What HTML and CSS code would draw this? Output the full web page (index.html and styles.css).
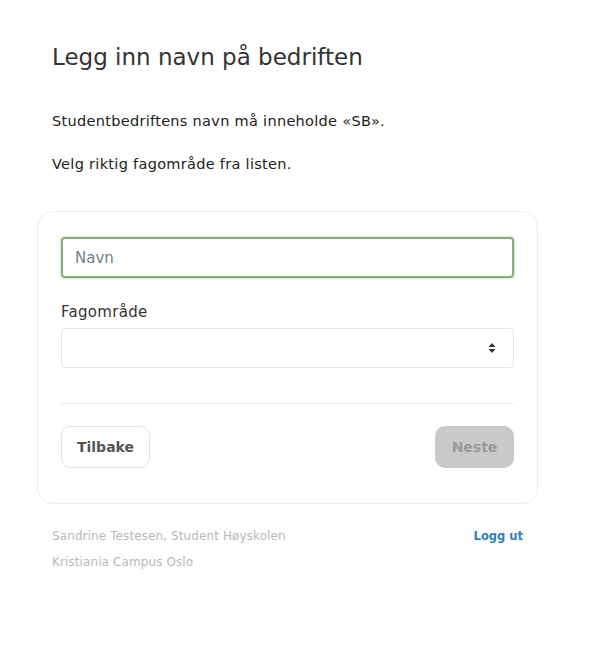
FILE: index.html
```html
<!DOCTYPE html>
<html lang="no">
<head>
<meta charset="utf-8">
<title>Legg inn navn på bedriften</title>
<link rel="stylesheet" href="styles.css">
</head>
<body>
<main class="page">
  <header class="intro">
    <h1 class="title">Legg inn navn på bedriften</h1>
    <p class="lead">Studentbedriftens navn må inneholde «SB».</p>
    <p class="lead">Velg riktig fagområde fra listen.</p>
  </header>
  <section class="card">
    <input class="field field-focus" type="text" placeholder="Navn">
    <label class="label">Fagområde</label>
    <div class="select">
      <svg class="arrows" width="8" height="12" viewBox="0 0 8 12"><path d="M4 1 L7.5 5 H0.5 Z M4 11 L0.5 7 H7.5 Z" fill="#333"/></svg>
    </div>
    <hr class="divider">
    <div class="actions">
      <button class="btn btn-back">Tilbake</button>
      <button class="btn btn-next">Neste</button>
    </div>
  </section>
  <footer class="foot">
    <div class="foot-info">
      <div>Sandrine Testesen, Student Høyskolen</div>
      <div>Kristiania Campus Oslo</div>
    </div>
    <a class="logout" href="#">Logg ut</a>
  </footer>
</main>
</body>
</html>
```
FILE: styles.css
```css
* { box-sizing: border-box; }
html, body { margin: 0; background: #fff; }
body { font-family: "DejaVu Sans", "Liberation Sans", sans-serif; color: #222; }
.page { width: 501px; margin-left: 37px; padding-top: 42px; }
.intro { padding-left: 15px; }
.title { margin: 0; font-size: 23px; font-weight: 400; line-height: 30px; color: #333; }
.lead { margin: 0; font-size: 14.5px; letter-spacing: 0.3px; line-height: 20px; color: #222; }
.title + .lead { margin-top: 39px; }
.lead + .lead { margin-top: 23px; }
.card { margin-top: 37px; border: 1px solid #ededed; border-radius: 16px; padding: 25px 23px 35px; display: flex; flex-direction: column; }
.field { width: 453px; height: 41px; border: 1px solid #d9d9d9; border-radius: 4px; padding: 0 12px; font: inherit; font-size: 15px; color: #333; outline: none; }
.field::placeholder { color: #6f7f8c; }
.field-focus { border: 2px solid #88ad78; box-shadow: 0 0 2px 1px #d6e6cc; padding-left: 12px; }
.label { margin-top: 24px; font-size: 15px; letter-spacing: 0.3px; line-height: 20px; color: #333; }
.select { margin-top: 6px; width: 453px; height: 40px; border: 1px solid #e6e6e6; border-radius: 4px; display: flex; align-items: center; justify-content: flex-end; padding-right: 17px; }
.divider { margin: 35px 0 0; border: 0; border-top: 1px solid #ebebeb; width: 453px; }
.actions { margin-top: 22px; display: flex; justify-content: space-between; width: 453px; }
.btn { font: inherit; font-size: 14px; font-weight: 700; height: 42px; border-radius: 10px; padding: 0; }
.btn-back { background: #fff; border: 1px solid #e4e4e4; color: #555; width: 89px; }
.btn-next { background: #c9c9c9; border: 0; color: #9b9b9b; width: 79px; }
.foot { margin-top: 19px; padding: 0 15px; display: flex; justify-content: space-between; align-items: flex-start; }
.foot-info { font-size: 12px; letter-spacing: 0.1px; line-height: 26px; color: #b9b9b9; }
.logout { font-size: 11.5px; font-weight: 700; line-height: 26px; color: #2b80c2; text-decoration: none; }
```
